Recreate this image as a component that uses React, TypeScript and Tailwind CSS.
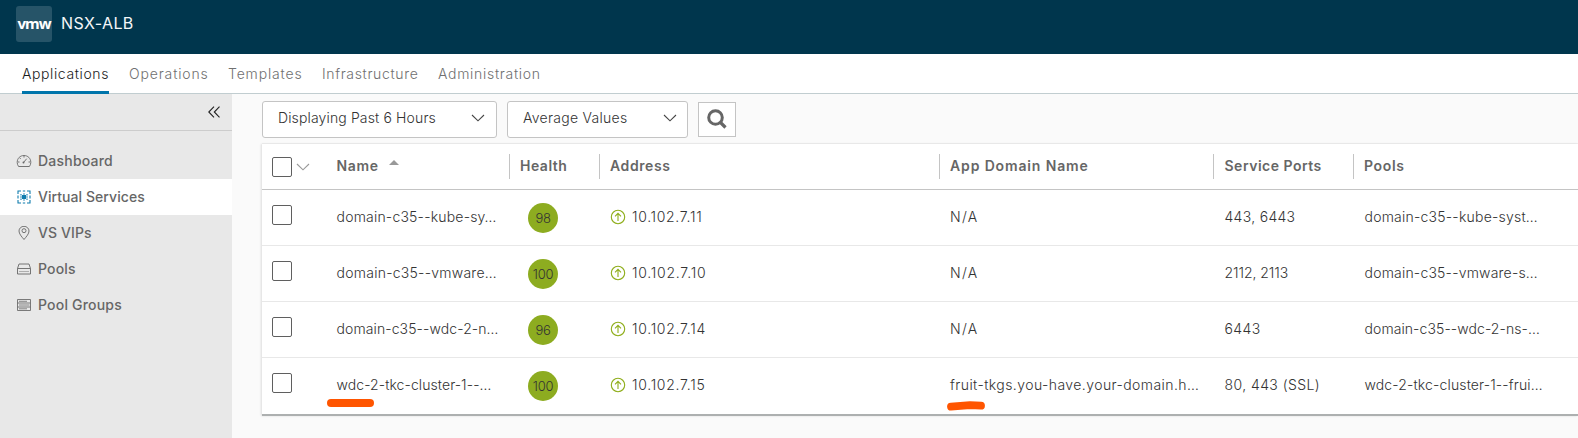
import type { ReactNode } from "react";

const tabs = [
  { label: "Applications", cls: "w-[87px] tracking-[0.61px] text-[#1b1b1b]", active: true },
  { label: "Operations", cls: "w-[79px] tracking-[0.85px] text-[#707070]" },
  { label: "Templates", cls: "w-[74px] tracking-[0.84px] text-[#707070]" },
  { label: "Infrastructure", cls: "w-[96px] tracking-[0.65px] text-[#707070]" },
  { label: "Administration", cls: "w-[104px] tracking-[0.7px] text-[#707070]" },
];

const DashboardIcon = () => (
  <svg width="16" height="14" viewBox="0 0 16 14" fill="none" stroke="#666" strokeWidth="0.9">
    <path d="M2.600 12.500h10.800c.9-1.200 1.400-2.600 1.400-4.200C14.800 4.300 11.800 1.500 8 1.500S1.200 4.300 1.200 8.300c0 1.600.5 3 1.400 4.200z" />
    <path d="M7.500 8.500l3.200-3.800M8 2v1.500M3.800 4l.9.9M2 8h1.500M12.500 8H14" />
    <circle cx="7.500" cy="8.500" r="1" fill="#666" stroke="none" />
  </svg>
);

const ServicesIcon = () => (
  <svg width="16" height="14" viewBox="0 0 16 14" fill="none" stroke="#0f7cae" strokeWidth="1.100">
    <path d="M5 1H2v3M2 5.500v3M2 10v3h3M6.800 1h2.400M11 1h3v3M14 5.500v3M14 10v3h-3M6.800 13h2.400" />
    <path d="M6 5h4v4H6z" fill="#0f7cae" stroke="none" />
    <path d="M5 4v1.500M5 6.300v1.500M5 8.500V10M11 4v1.500M11 6.300v1.500M11 8.500V10M7.200 4h1.600M7.200 10h1.600" />
  </svg>
);

const PinIcon = () => (
  <svg width="16" height="14" viewBox="0 0 16 14" fill="none" stroke="#666" strokeWidth="0.9">
    <path d="M8 13.500C5.500 10.500 3 7.800 3 5a5 4.700 0 0 1 10 0c0 2.800-2.500 5.500-5 8.500z" />
    <circle cx="8" cy="4.700" r="2" />
  </svg>
);

const PoolIcon = () => (
  <svg width="16" height="14" viewBox="0 0 16 14" fill="none" stroke="#666" strokeWidth="0.9">
    <path d="M1.500 6.500l1.500-4.500h10l1.500 4.500v5.500h-13zM1.500 6.500h13" />
    <path d="M3.500 9.500h9" strokeDasharray="1 1" />
  </svg>
);

const PoolGroupIcon = () => (
  <svg width="16" height="14" viewBox="0 0 16 14" fill="none" stroke="#6c6c6c" strokeWidth="0.9">
    <path d="M1.500 1.500h13v11h-13zM1.500 5h13M1.500 9h13" />
    <path d="M3 3.300h8M3 7h10.500M3 10.800h8" strokeWidth="0.800" />
  </svg>
);

const nav: { label: string; icon: ReactNode; cls: string; active?: boolean }[] = [
  { label: "Dashboard", icon: <DashboardIcon />, cls: "tracking-[0.22px]" },
  { label: "Virtual Services", icon: <ServicesIcon />, cls: "tracking-[0.06px]", active: true },
  { label: "VS VIPs", icon: <PinIcon />, cls: "tracking-[0.1px]" },
  { label: "Pools", icon: <PoolIcon />, cls: "tracking-[0.15px]" },
  { label: "Pool Groups", icon: <PoolGroupIcon />, cls: "tracking-[0.2px]" },
];

const rows = [
  {
    name: "domain-c35--kube-sy…", nameCls: "tracking-[0.2px]",
    health: 98,
    address: "10.102.7.11", addressCls: "tracking-[0.68px]",
    domain: "N/A", domainCls: "tracking-[1.3px]",
    ports: "443, 6443", portsCls: "tracking-[0.3px]",
    pool: "domain-c35--kube-syst…", poolCls: "tracking-[0.22px]",
  },
  {
    name: "domain-c35--vmware…", nameCls: "tracking-[0.25px]",
    health: 100,
    address: "10.102.7.10", addressCls: "tracking-[0.76px]",
    domain: "N/A", domainCls: "tracking-[1.3px]",
    ports: "2112, 2113", portsCls: "tracking-[-0.06px]",
    pool: "domain-c35--vmware-s…", poolCls: "tracking-[0.2px]",
  },
  {
    name: "domain-c35--wdc-2-n…", nameCls: "tracking-[0.1px]",
    health: 96,
    address: "10.102.7.14", addressCls: "tracking-[0.7px]",
    domain: "N/A", domainCls: "tracking-[1.3px]",
    ports: "6443", portsCls: "tracking-[0.4px]",
    pool: "domain-c35--wdc-2-ns-…", poolCls: "tracking-[0.08px]",
  },
  {
    name: "wdc-2-tkc-cluster-1--…", nameCls: "tracking-[0.08px]",
    health: 100,
    address: "10.102.7.15", addressCls: "tracking-[0.7px]",
    domain: "fruit-tkgs.you-have.your-domain.h…", domainCls: "tracking-[0.43px]",
    ports: "80, 443 (SSL)", portsCls: "tracking-[0.42px]",
    pool: "wdc-2-tkc-cluster-1--frui…", poolCls: "tracking-[0.14px]",
  },
];

const Chevron = ({ color = "#454545" }: { color?: string }) => (
  <svg width="14" height="8" viewBox="0 0 14 8" fill="none" stroke={color} strokeWidth="1.100">
    <path d="M1 1l6 5.800L13 1" />
  </svg>
);

const Checkbox = () => <span className="block size-5 shrink-0 rounded-[2px] border border-[#5f5f5f] bg-white" />;

const UpIcon = () => (
  <svg width="16" height="16" viewBox="0 0 16 16" fill="none" stroke="#8fae1b" strokeWidth="1.100" className="shrink-0">
    <circle cx="8" cy="8" r="6.700" />
    <path d="M8 12V4.500M5 7.300l3-3 3 3" />
  </svg>
);

const grid = "grid grid-cols-[74px_173px_90px_340px_274px_140px_1fr]";

const Head = ({ label, cls }: { label: string; cls: string }) => (
  <div className="flex h-[25px] items-center border-l border-[#c4c4c4] pb-px pl-[10px]">
    <span className={cls}>{label}</span>
  </div>
);

export default function App() {
  return (
    <div className="flex h-[438px] w-[1578px] flex-col overflow-hidden bg-[#fafafa] font-['Inter',sans-serif] text-sm">
      <header className="flex h-[54px] shrink-0 items-start bg-[#00364d] pt-[6px] pl-4">
        <div className="flex size-9 items-center justify-center rounded-[3px] bg-[#265468]">
          <span className="pb-[2px] font-['Noto_Sans',sans-serif] text-[15px] leading-none font-bold tracking-[-1px] text-white">vmw</span>
        </div>
        <h1 className="mt-[5px] ml-[9px] text-base leading-6 font-normal tracking-[0.4px] text-[#f4f7f8]">NSX-ALB</h1>
      </header>

      <nav className="flex h-10 shrink-0 gap-5 border-b border-[#c1cdd0] bg-white pl-[22px]">
        {tabs.map((t) => (
          <a
            key={t.label}
            className={`${t.cls} flex h-10 items-center border-b-[3px] pt-[3px] font-light whitespace-nowrap ${
              t.active ? "border-[#0075ab]" : "border-transparent"
            }`}
          >
            {t.label}
          </a>
        ))}
      </nav>

      <div className="flex min-h-0 flex-1">
        <aside className="w-[232px] shrink-0 bg-[#e8e8e8]">
          <div className="flex h-[37px] items-center justify-end border-b border-[#ccc] pr-[11px]">
            <svg width="14" height="12" viewBox="0 0 14 12" fill="none" stroke="#222" strokeWidth="1.100">
              <path d="M7 .700L1.800 6 7 11.300M12.500.700L7.300 6l5.200 5.300" />
            </svg>
          </div>
          <ul className="pt-3">
            {nav.map((n) => (
              <li key={n.label} className={`flex h-9 items-center gap-[6px] pl-4 ${n.active ? "bg-white" : ""}`}>
                {n.icon}
                <span className={`${n.cls} font-medium text-[#666]`}>{n.label}</span>
              </li>
            ))}
          </ul>
        </aside>

        <main className="flex min-w-0 flex-1 flex-col pl-[30px]">
          <div className="flex h-[50px] shrink-0 items-start gap-[10px] pt-[7px]">
            <div className="flex h-[37px] w-[235px] items-center justify-between rounded-[3px] border border-[#c4c4c4] bg-white pr-[11px] pb-[3px] pl-[15px]">
              <span className="font-light tracking-[0.14px] text-[#333]">Displaying Past 6 Hours</span>
              <Chevron />
            </div>
            <div className="flex h-[37px] w-[181px] items-center justify-between rounded-[3px] border border-[#c4c4c4] bg-white pr-[10px] pb-[3px] pl-[15px]">
              <span className="font-light tracking-[0.28px] text-[#333]">Average Values</span>
              <Chevron />
            </div>
            <div className="mt-px flex h-[35px] w-[38px] items-center justify-center border border-[#c4c4c4] bg-white pb-[2px]">
              <svg width="20" height="20" viewBox="0 0 20 20" fill="none" stroke="#666">
                <circle cx="8.500" cy="8.500" r="6.800" strokeWidth="3" />
                <path d="M13 13l5.500 5.500" strokeWidth="3.200" />
              </svg>
            </div>
          </div>

          <section className="h-[272px] shrink-0 border-b-2 border-[#adb0b0] bg-white shadow-[-1px_0_2px_#ddd,0_-1px_0_#eee]">
            <div className={`${grid} h-[46px] items-center border-b border-[#c4c4c4] font-semibold whitespace-nowrap text-[#666]`}>
              <div className="flex items-center gap-1 pt-px pl-[10px]">
                <Checkbox />
                <Chevron color="#999" />
              </div>
              <div className="flex items-center gap-[10px] pb-[2px] pl-[0.5px] tracking-[0.65px]">
                Name
                <svg width="10" height="5" viewBox="0 0 10 5" className="mb-[7px]">
                  <path d="M5 0l5 5H0z" fill="#999" />
                </svg>
              </div>
              <Head label="Health" cls="tracking-[0.5px]" />
              <Head label="Address" cls="tracking-[0.6px]" />
              <Head label="App Domain Name" cls="tracking-[0.86px]" />
              <Head label="Service Ports" cls="tracking-[0.5px] pl-[0.5px]" />
              <Head label="Pools" cls="tracking-[0.65px]" />
            </div>
            {rows.map((r, i) => (
              <div
                key={r.name}
                className={`${grid} h-14 items-center border-b pb-px font-light whitespace-nowrap text-[#333] ${
                  i < 3 ? "border-[#e8e8e8]" : "border-transparent"
                }`}
              >
                <div className="pb-1 pl-[10px]">
                  <Checkbox />
                </div>
                <div className="relative pl-[0.5px]">
                  <span className={r.nameCls}>{r.name}</span>
                  {i === 3 && <span className="absolute top-[24px] -left-[9px] h-2 w-[47px] rounded-full bg-[#ff5500]" />}
                </div>
                <div className="pt-[2px] pl-[19px]">
                  <span className="flex size-[30px] items-center justify-center rounded-full bg-[#8dac20] text-[13px] tracking-[-0.3px] text-[#333]">
                    {r.health}
                  </span>
                </div>
                <div className="flex items-center gap-[6px] pl-[11px]">
                  <UpIcon />
                  <span className={r.addressCls}>{r.address}</span>
                </div>
                <div className="relative pl-[11px]">
                  <span className={r.domainCls}>{r.domain}</span>
                  {i === 3 && (
                    <svg width="38" height="10" viewBox="0 0 38 10" className="absolute top-[26px] left-[8px]">
                      <path d="M4 5.600L23 4.200L34 4.700" fill="none" stroke="#ff5500" strokeWidth="7.800" strokeLinecap="round" strokeLinejoin="round" />
                    </svg>
                  )}
                </div>
                <div className={`pl-[11.5px] ${r.portsCls}`}>{r.ports}</div>
                <div className={`pl-[11.5px] ${r.poolCls}`}>{r.pool}</div>
              </div>
            ))}
          </section>
        </main>
      </div>
    </div>
  );
}
